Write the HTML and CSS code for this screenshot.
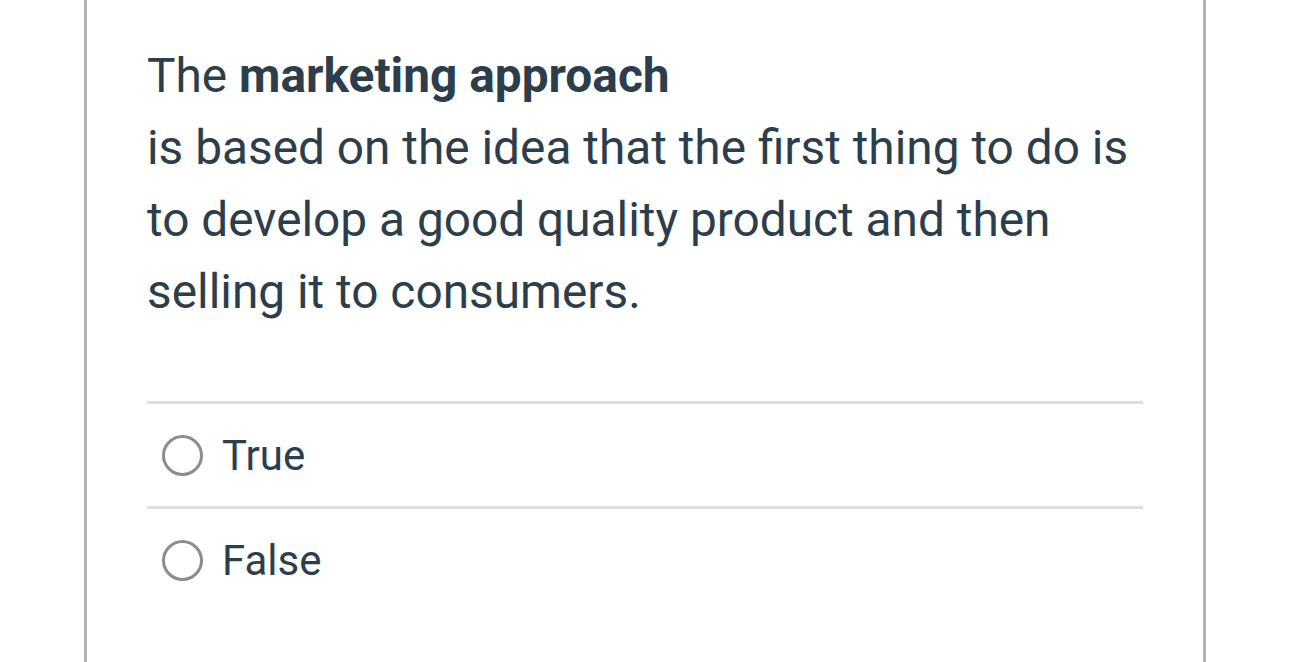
FILE: index.html
```html
<!DOCTYPE html>
<html>
<head>
<meta charset="utf-8">
<link rel="stylesheet" href="styles.css">
</head>
<body>
<div class="card">
  <div class="question">The <strong>marketing approach</strong><br>is based on the idea that the first thing to do is to develop a good quality product and then selling it to consumers.</div>
  <div class="answers">
    <label class="answer"><span class="radio"></span><span class="label">True</span></label>
    <label class="answer"><span class="radio"></span><span class="label">False</span></label>
  </div>
</div>
</body>
</html>
```
FILE: styles.css
```css
html, body {
  margin: 0;
  padding: 0;
  background: #ffffff;
}
body {
  font-family: Roboto, "Liberation Sans", sans-serif;
  color: #2c3e4b;
  overflow: hidden;
}
.card {
  margin-left: 84px;
  width: 1122px;
  height: 662px;
  box-sizing: border-box;
  border-left: 3px solid #b3b3b3;
  border-right: 3px solid #b3b3b3;
  padding: 40px 60px 0 60px;
}
.question {
  font-size: 47.8px;
  line-height: 72px;
}
.question strong {
  font-weight: 700;
}
.answers {
  margin-top: 73px;
}
.answer {
  display: flex;
  align-items: center;
  height: 102px;
  border-top: 3px solid #dedede;
  padding-left: 15px;
}
.radio {
  width: 35px;
  height: 35px;
  border: 3px solid #8c8c8c;
  border-radius: 50%;
  margin-right: 19px;
  flex: none;
}
.label {
  font-size: 42px;
}
```
